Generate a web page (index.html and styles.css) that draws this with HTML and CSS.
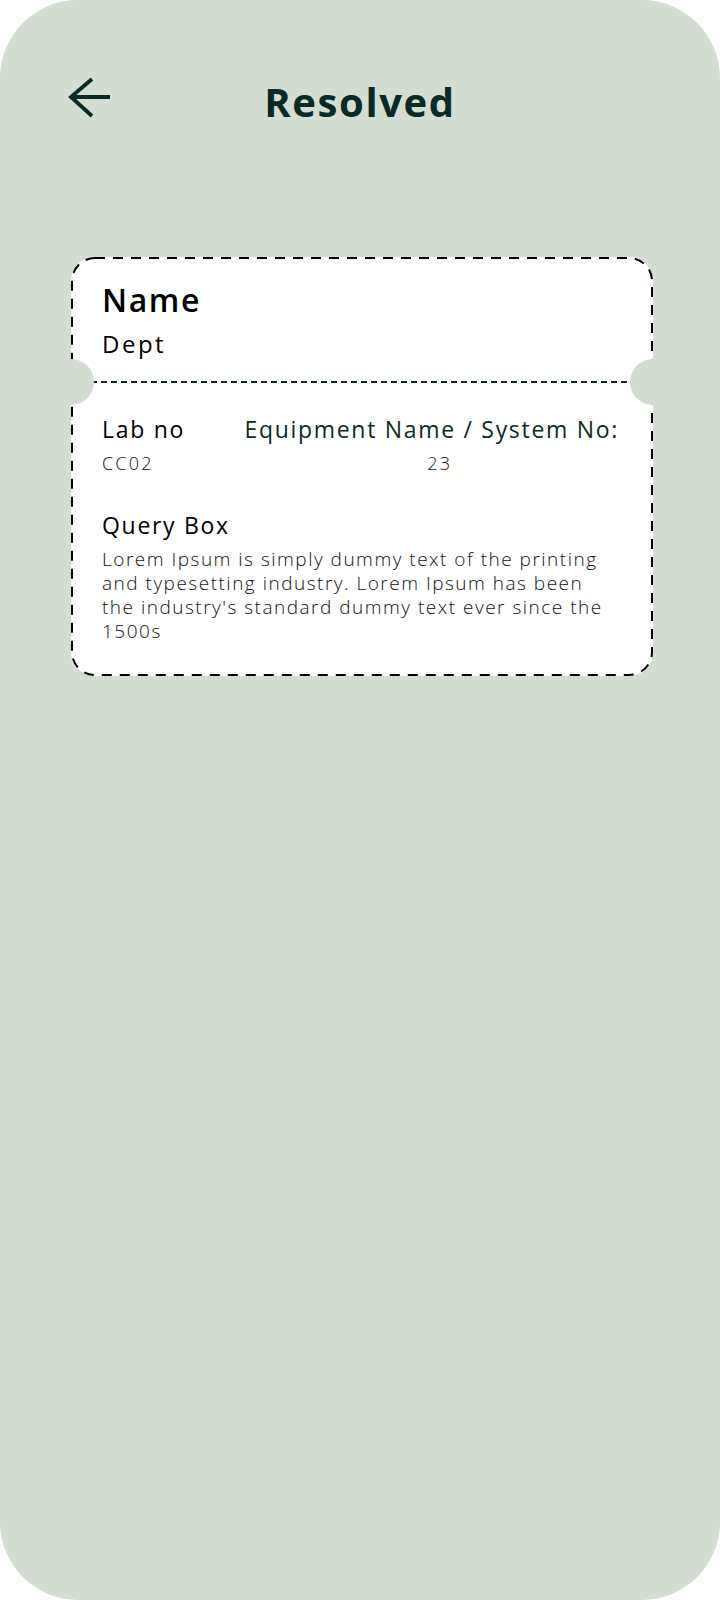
FILE: index.html
```html
<!DOCTYPE html>
<html lang="en">
<head>
<meta charset="utf-8">
<title>Resolved</title>
<link rel="stylesheet" href="styles.css">
</head>
<body>
<div class="frame">
  <header class="topbar">
    <button class="back" aria-label="Back">
      <svg viewBox="0 0 48 48" width="48" height="48">
        <path d="M5 19 H44 M26 1 L5 19 L26 38" fill="none" stroke="#0b2a25" stroke-width="3.8" stroke-linejoin="miter"/>
      </svg>
    </button>
    <h1 class="title">Resolved</h1>
  </header>

  <section class="ticket">
    <svg class="ticket-outline" aria-hidden="true"><rect/></svg>
    <div class="ticket-head">
      <div class="name">Name</div>
      <div class="dept">Dept</div>
    </div>
    <div class="divider">
      <span class="notch notch-left"></span>
      <span class="notch notch-right"></span>
    </div>
    <div class="ticket-body">
      <div class="meta">
        <div class="col">
          <div class="label">Lab no</div>
          <div class="value">CC02</div>
        </div>
        <div class="col col-center">
          <div class="label label-green">Equipment Name / System No:</div>
          <div class="value value-shift">23</div>
        </div>
      </div>
      <div class="query">
        <div class="label">Query Box</div>
        <p class="query-text">Lorem Ipsum is simply dummy text of the printing<br>and typesetting industry. Lorem Ipsum has been<br>the industry's standard dummy text ever since the<br>1500s</p>
      </div>
    </div>
  </section>
</div>
</body>
</html>
```

FILE: styles.css
```css
* {
  box-sizing: border-box;
  margin: 0;
  padding: 0;
}

html,
body {
  width: 720px;
  height: 1600px;
  background: #ffffff;
}

body {
  font-family: "Open Sans", "Liberation Sans", sans-serif;
  color: #000;
}

.frame {
  width: 720px;
  height: 1600px;
  background: #d3ddd1;
  border-radius: 78px;
  padding-top: 78px;
}

.topbar {
  display: grid;
  grid-template-columns: 1fr auto 1fr;
  align-items: start;
  padding: 0 66px;
  height: 48px;
}

.back {
  width: 48px;
  height: 48px;
  background: none;
  border: 0;
  display: block;
}

.back svg {
  display: block;
  overflow: visible;
}

.title {
  font-size: 40px;
  font-weight: 700;
  line-height: 48px;
  color: #0b2a25;
  letter-spacing: 1.6px;
}

.ticket {
  position: relative;
  margin: 131px 0 0 71px;
  width: 582px;
  background: #fff;
  border-radius: 24px;
}

.ticket-outline {
  position: absolute;
  inset: 0;
  width: 100%;
  height: 100%;
  overflow: visible;
  pointer-events: none;
}

.ticket-outline rect {
  x: 1px;
  y: 1px;
  width: calc(100% - 2px);
  height: calc(100% - 2px);
  rx: 23px;
  fill: none;
  stroke: #000;
  stroke-width: 2;
  stroke-dasharray: 10 8;
}

.ticket-head {
  padding: 24px 31px 22px;
}

.name {
  font-size: 32px;
  line-height: 38px;
  font-weight: 600;
  letter-spacing: 1.6px;
}

.dept {
  margin-top: 10px;
  font-size: 24px;
  line-height: 30px;
  font-weight: 400;
  letter-spacing: 2.5px;
}

.divider {
  position: relative;
  height: 2px;
  background: repeating-linear-gradient(90deg, #0b2a25 0 6px, transparent 6px 10px);
}

.notch {
  position: absolute;
  top: -22px;
  width: 46px;
  height: 46px;
  border-radius: 50%;
  background: #d3ddd1;
}

.notch-left {
  left: -23px;
}

.notch-right {
  right: -23px;
}

.ticket-body {
  padding: 32px 34px 33px 31px;
}

.meta {
  display: flex;
  justify-content: space-between;
}

.col-center {
  text-align: center;
}

.label {
  font-size: 23px;
  line-height: 28px;
  font-weight: 400;
  letter-spacing: 1.7px;
}

.label-green {
  color: #0b2a25;
}

.value {
  margin-top: 9px;
  font-size: 18px;
  line-height: 22px;
  font-weight: 300;
  letter-spacing: 2.2px;
  color: #111;
}

.value-shift {
  padding-left: 16px;
}

.query {
  margin-top: 37px;
}

.query-text {
  margin-top: 8px;
  font-size: 19px;
  line-height: 24px;
  font-weight: 300;
  letter-spacing: 1.5px;
  color: #111;
}
```
